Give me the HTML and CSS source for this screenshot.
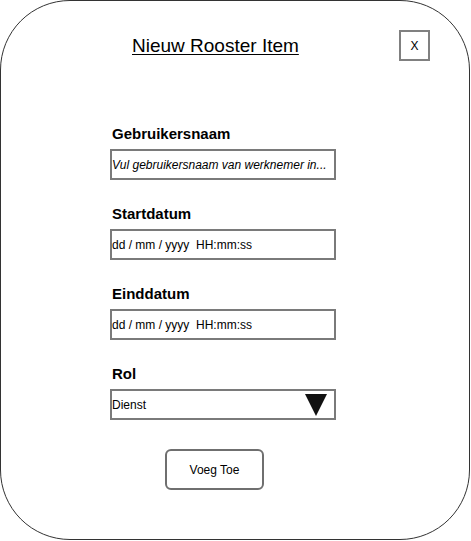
FILE: index.html
```html
<!DOCTYPE html>
<html lang="nl">
<head>
<meta charset="utf-8">
<title>Nieuw Rooster Item</title>
<link rel="stylesheet" href="styles.css">
</head>
<body>
<div class="card">
  <div class="header">
    <h1 class="title">Nieuw Rooster Item</h1>
    <div class="close">X</div>
  </div>
  <div class="form">
    <div class="group">
      <div class="label">Gebruikersnaam</div>
      <div class="field italic">Vul gebruikersnaam van werknemer in...</div>
    </div>
    <div class="group">
      <div class="label">Startdatum</div>
      <div class="field">dd / mm / yyyy&nbsp; HH:mm:ss</div>
    </div>
    <div class="group">
      <div class="label">Einddatum</div>
      <div class="field">dd / mm / yyyy&nbsp; HH:mm:ss</div>
    </div>
    <div class="group">
      <div class="label">Rol</div>
      <div class="field select">
        <span>Dienst</span>
        <svg class="arrow" width="22" height="22" viewBox="0 0 22 22"><polygon points="0,0 22,0 11,22" fill="#111"/></svg>
      </div>
    </div>
    <div class="button">Voeg Toe</div>
  </div>
</div>
</body>
</html>
```
FILE: styles.css
```css
html, body {
  margin: 0;
  padding: 0;
  background: #fff;
}
body {
  font-family: "Liberation Sans", Arial, Helvetica, sans-serif;
  color: #000;
}
.card {
  box-sizing: border-box;
  width: 470px;
  height: 540px;
  border: 1px solid #333;
  border-radius: 70px;
  padding: 29px 39px 0 109px;
}
.header {
  display: flex;
  align-items: center;
  height: 31px;
}
.title {
  margin: 0 0 0 22px;
  font-size: 19px;
  font-weight: normal;
  line-height: 30px;
  text-decoration: underline;
  text-underline-offset: 2px;
  text-decoration-thickness: 1px;
}
.close {
  margin-left: auto;
  box-sizing: border-box;
  width: 31px;
  height: 31px;
  border: 2px solid #808080;
  display: flex;
  align-items: center;
  justify-content: center;
  font-size: 12px;
}
.form {
  margin-top: 64px;
  width: 226px;
  display: flex;
  flex-direction: column;
  gap: 25px;
}
.group {
  display: flex;
  flex-direction: column;
}
.label {
  font-size: 15px;
  font-weight: bold;
  line-height: 17px;
  padding-left: 2px;
  margin-bottom: 7px;
}
.field {
  box-sizing: border-box;
  height: 31px;
  border: 2px solid #7a7a7a;
  display: flex;
  align-items: center;
  font-size: 12px;
  padding-left: 0;
  white-space: nowrap;
}
.italic {
  font-style: italic;
}
.select {
  justify-content: space-between;
}
.arrow {
  display: block;
  margin-right: 7px;
  margin-top: 1px;
}
.button {
  box-sizing: border-box;
  margin-top: 4px;
  margin-left: 55px;
  width: 99px;
  height: 41px;
  border: 2px solid #6f6f6f;
  border-radius: 6px;
  display: flex;
  align-items: center;
  justify-content: center;
  font-size: 12px;
}
```
